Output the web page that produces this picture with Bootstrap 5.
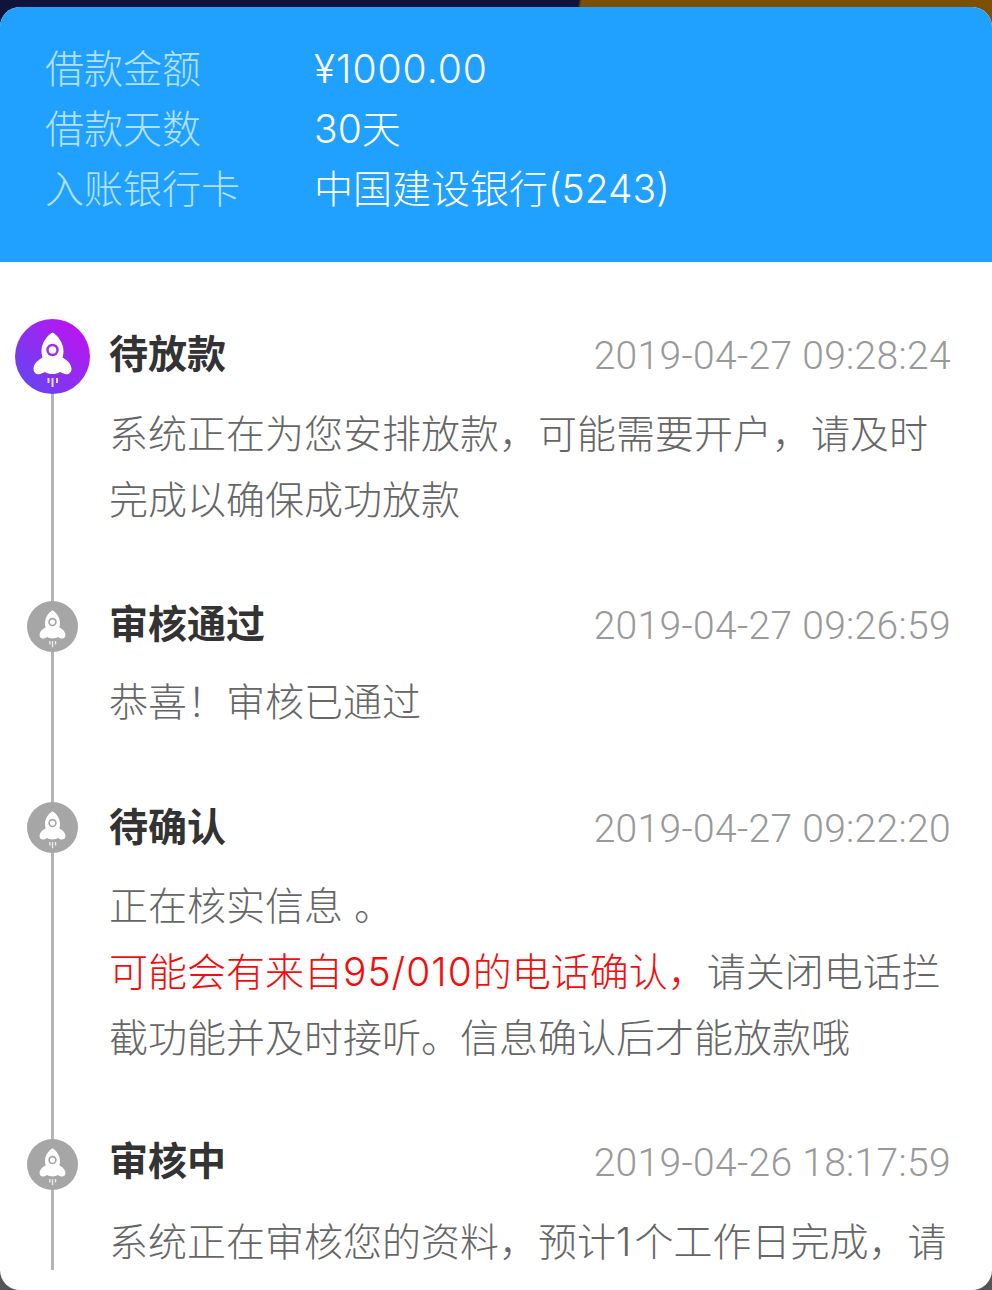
<!DOCTYPE html>
<html lang="zh-CN">
<head>
    <meta charset="UTF-8">
    <meta name="viewport" content="width=device-width, initial-scale=1.0">
    <title>借款详情</title>
    <link rel="stylesheet" href="https://cdn.jsdelivr.net/npm/bootstrap@5.3.0/dist/css/bootstrap.min.css">
    <style>
        html, body {
            height: 100%;
        }
        body {
            background: linear-gradient(100deg, #10143c 0, #10143c 570px, #7c5000 573px, #7c5000 100%) top / 100% 40px no-repeat, #555;
            font-family: Inter, "Noto Sans CJK SC", sans-serif;
            font-weight: 300;
            font-size: 39px;
            overflow: hidden;
        }
        .sheet {
            position: absolute;
            inset: 7px 0 0 0;
            background: #fff;
            border-radius: 20px;
            overflow: hidden;
        }
        .loan-head {
            background: #20a0ff;
            color: #fff;
            padding: 32px 45px 43px;
            line-height: 60px;
        }
        .loan-label {
            width: 269px;
            color: #b4e0ff;
        }
        .loan-num {
            letter-spacing: 1px;
        }
        .steps {
            position: relative;
            padding: 54px 41px 0 0;
        }
        .steps::before {
            content: "";
            position: absolute;
            left: 51px;
            top: 120px;
            width: 3px;
            height: 888px;
            background: #b4b4b4;
        }
        .step {
            padding-bottom: 53px;
        }
        .step-dot {
            width: 109px;
            flex: none;
            position: relative;
        }
        .step-dot svg {
            position: absolute;
            left: 27px;
            top: 13px;
            width: 51px;
            height: 51px;
        }
        .step-now .step-dot svg {
            left: 15px;
            top: 3px;
            width: 75px;
            height: 75px;
        }
        .step-title {
            height: 76px;
            line-height: 76px;
            font-weight: 700;
            color: #333;
            margin-bottom: 9px;
        }
        .step-time {
            font-family: Roboto, sans-serif;
            color: #999;
            font-weight: 300;
            letter-spacing: .330px;
            padding-top: 2px;
        }
        .step-text {
            color: #666;
            line-height: 66px;
            margin: 0;
        }
        .step-alert {
            color: #f40c0c;
        }
        .text-num {
            letter-spacing: 1px;
        }
        .text-one {
            letter-spacing: 3px;
        }
        /* small per-row differences in the original spacing */
        .step:nth-child(2) { padding-bottom: 54px; }
        .step:nth-child(2) .step-title { margin-bottom: 7px; }
        .step:nth-child(2) .step-dot svg { top: 15px; }
        .step:nth-child(3) { padding-bottom: 52px; }
        .step:nth-child(3) .step-title { margin-bottom: 8px; }
        .step:nth-child(4) .step-title { margin-bottom: 10px; }
        .step:nth-child(4) .step-dot svg { top: 16px; }
    </style>
</head>
<body>
    <svg width="0" height="0" class="d-block">
        <defs>
            <linearGradient id="purple" x1="0" y1="1" x2="1" y2="0">
                <stop offset="0" stop-color="#5a4cf0"/>
                <stop offset="1" stop-color="#c80cf0"/>
            </linearGradient>
            <g id="rocket">
                <path fill="#fff" d="M37.500 13.500C32 16.500 26.500 24 26.500 32C26.500 35 27 37 27.500 38.500C23 41 18.500 45 18.500 50C18.500 54 22 56 25 55C27 54.500 28.500 53.500 30 53C32 54.500 34.500 55 37.500 55C40.500 55 43 54.500 45 53C46.500 53.500 48 54.500 50 55C53 56 56.500 54 56.500 50C56.500 45 52 41 47.500 38.500C48 37 48.500 35 48.500 32C48.500 24 43 16.500 37.500 13.500Z"/>
                <path fill="none" stroke="#fff" stroke-opacity=".8" stroke-width="2" d="M33.500 59V64M37.500 59V68M42 59V64"/>
            </g>
        </defs>
    </svg>

    <div class="sheet">
        <div class="loan-head">
            <div class="d-flex"><div class="loan-label">借款金额</div><div class="loan-num">¥1000.00</div></div>
            <div class="d-flex"><div class="loan-label">借款天数</div><div>30天</div></div>
            <div class="d-flex"><div class="loan-label">入账银行卡</div><div>中国建设银行(5243)</div></div>
        </div>

        <div class="steps">
            <div class="step step-now d-flex">
                <div class="step-dot">
                    <svg viewBox="0 0 75 75"><circle cx="37.500" cy="37.500" r="37.500" fill="url(#purple)"/><use href="#rocket"/><circle cx="37.500" cy="31" r="5" fill="none" stroke="#a428f0" stroke-width="2.400"/></svg>
                </div>
                <div class="flex-grow-1">
                    <div class="step-title d-flex justify-content-between"><span>待放款</span><span class="step-time">2019-04-27 09:28:24</span></div>
                    <p class="step-text">系统正在为您安排放款，可能需要开户，请及时<br>完成以确保成功放款</p>
                </div>
            </div>

            <div class="step d-flex">
                <div class="step-dot">
                    <svg viewBox="0 0 75 75"><circle cx="37.500" cy="37.500" r="37.500" fill="#a6a6a6"/><use href="#rocket"/><circle cx="37.500" cy="31" r="5" fill="none" stroke="#a6a6a6" stroke-width="2.400"/></svg>
                </div>
                <div class="flex-grow-1">
                    <div class="step-title d-flex justify-content-between"><span>审核通过</span><span class="step-time">2019-04-27 09:26:59</span></div>
                    <p class="step-text">恭喜！审核已通过</p>
                </div>
            </div>

            <div class="step d-flex">
                <div class="step-dot">
                    <svg viewBox="0 0 75 75"><circle cx="37.500" cy="37.500" r="37.500" fill="#a6a6a6"/><use href="#rocket"/><circle cx="37.500" cy="31" r="5" fill="none" stroke="#a6a6a6" stroke-width="2.400"/></svg>
                </div>
                <div class="flex-grow-1">
                    <div class="step-title d-flex justify-content-between"><span>待确认</span><span class="step-time">2019-04-27 09:22:20</span></div>
                    <p class="step-text">正在核实信息 。<br><span class="step-alert">可能会有来自<span class="text-num">95/010</span>的电话确认，</span>请关闭电话拦<br>截功能并及时接听。信息确认后才能放款哦</p>
                </div>
            </div>

            <div class="step d-flex">
                <div class="step-dot">
                    <svg viewBox="0 0 75 75"><circle cx="37.500" cy="37.500" r="37.500" fill="#a6a6a6"/><use href="#rocket"/><circle cx="37.500" cy="31" r="5" fill="none" stroke="#a6a6a6" stroke-width="2.400"/></svg>
                </div>
                <div class="flex-grow-1">
                    <div class="step-title d-flex justify-content-between"><span>审核中</span><span class="step-time">2019-04-26 18:17:59</span></div>
                    <p class="step-text">系统正在审核您的资料，预计<span class="text-one">1</span>个工作日完成，请</p>
                </div>
            </div>
        </div>
    </div>
</body>
</html>
